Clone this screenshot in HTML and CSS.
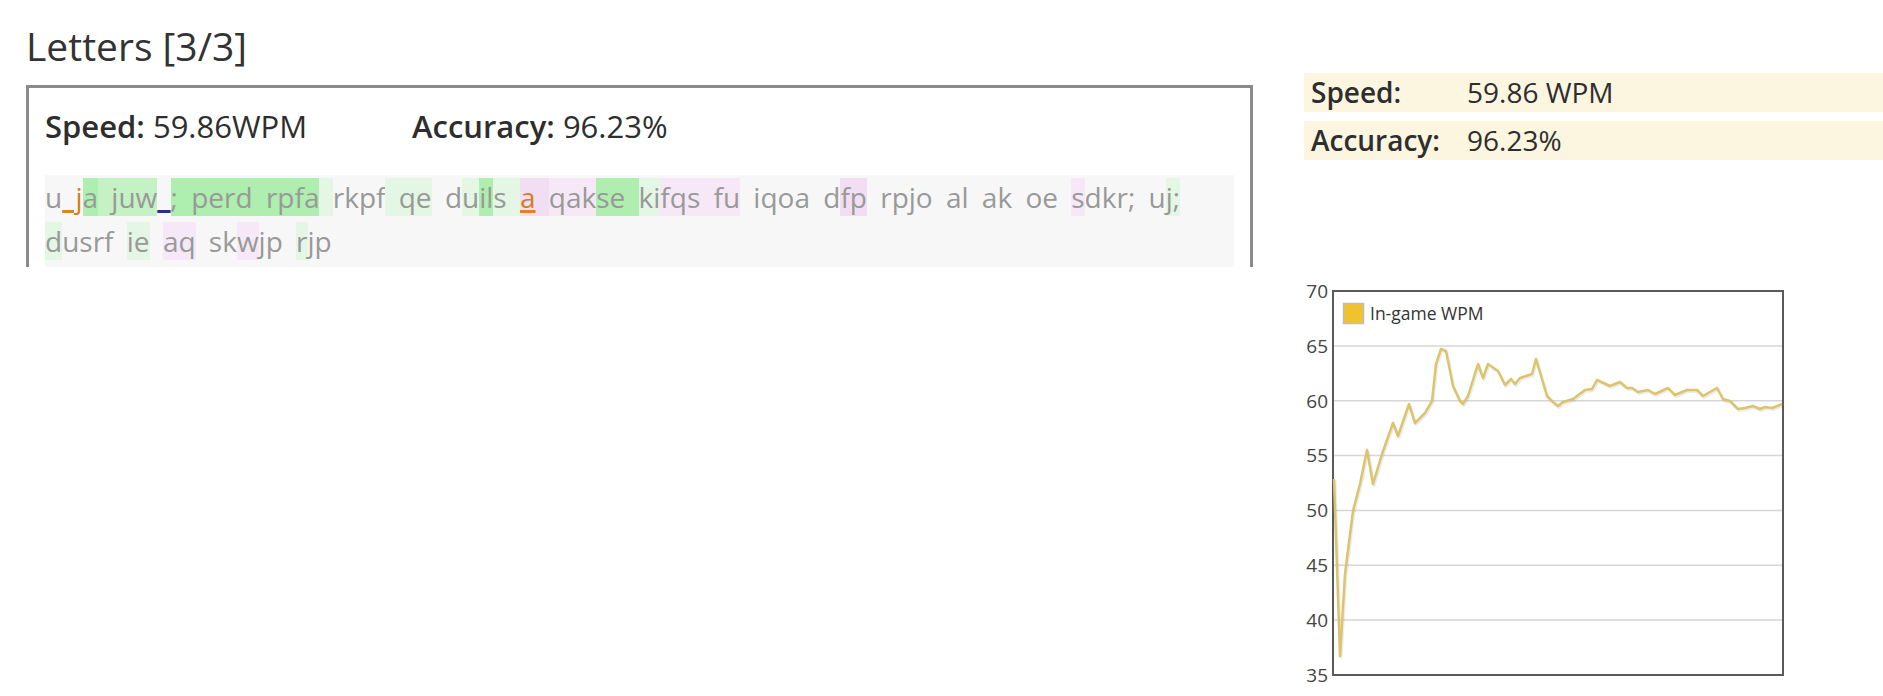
FILE: index.html
```html
<!DOCTYPE html>
<html lang="en">
<head>
<meta charset="utf-8">
<title>Letters [3/3]</title>
<link rel="stylesheet" href="styles.css">
</head>
<body>
<div class="page">
  <section class="main">
    <h1 class="title">Letters [3/3]</h1>
    <div class="box">
      <div class="stats">
        <div class="stat"><b>Speed:</b> 59.86WPM</div>
        <div class="stat"><b>Accuracy:</b> 96.23%</div>
      </div>
      <div class="typed">u<span class="err"> j</span><span class="g3">a</span><span class="g2"> ju</span><span class="g2">w</span><span class="miss"> </span><span class="g3">; perd rpfa</span><span class="g1"> </span>rkpf<span class="g1"> qe</span> d<span class="g1">u</span><span class="g3">il</span><span class="g1">s </span><span class="p2"><span class="err">a</span> </span><span class="p1">qak</span><span class="g3">se </span><span class="g1">ki</span><span class="p1">fqs fu</span> iqoa d<span class="p2">fp</span> rpjo al ak oe <span class="p1">s</span>dkr; u<span class="g1">j;</span><br><span class="g1">d</span>usrf <span class="g1">ie</span> <span class="p1">aq</span> sk<span class="p1">w</span>jp <span class="g1">r</span>jp</div>
    </div>
  </section>
  <aside class="side">
    <div class="row"><span class="label">Speed:</span><span class="value">59.86 WPM</span></div>
    <div class="row"><span class="label">Accuracy:</span><span class="value">96.23%</span></div>
    <svg class="chart" width="490" height="412" viewBox="0 0 490 412">
      <g class="grid">
        <line x1="33" y1="64.9" x2="483" y2="64.9"/>
        <line x1="33" y1="119.7" x2="483" y2="119.7"/>
        <line x1="33" y1="174.6" x2="483" y2="174.6"/>
        <line x1="33" y1="229.4" x2="483" y2="229.4"/>
        <line x1="33" y1="284.3" x2="483" y2="284.3"/>
        <line x1="33" y1="339.1" x2="483" y2="339.1"/>
      </g>
      <rect class="frame" x="33" y="10" width="450" height="384"/>
      <g class="ylabels">
        <text x="28" y="16.8">70</text>
        <text x="28" y="71.7">65</text>
        <text x="28" y="126.5">60</text>
        <text x="28" y="181.4">55</text>
        <text x="28" y="236.2">50</text>
        <text x="28" y="291.1">45</text>
        <text x="28" y="345.9">40</text>
        <text x="28" y="400.8">35</text>
      </g>
      <polyline class="shadow" points="34,198 40,375 45,293 53,230 60,203 67,169 73,203 82,173 93,142 98,155 109,123 115,142 125,132 132,120 136,83 141,68 146,70 153,105 160,120 163,123 168,115 178,83 183,97 188,83 198,90 205,104 211,98 215,103 220,97 232,93 236,78 247,115 253,121 258,125 263,121 273,118 285,109 292,108 297,99 310,105 320,101 327,107 332,107 338,111 348,109 355,113 368,107 375,114 387,109 397,109 403,115 417,107 423,118 430,120 438,128 445,127 453,125 460,128 465,126 472,127 482,123"/>
      <polyline class="line" points="34,198 40,375 45,293 53,230 60,203 67,169 73,203 82,173 93,142 98,155 109,123 115,142 125,132 132,120 136,83 141,68 146,70 153,105 160,120 163,123 168,115 178,83 183,97 188,83 198,90 205,104 211,98 215,103 220,97 232,93 236,78 247,115 253,121 258,125 263,121 273,118 285,109 292,108 297,99 310,105 320,101 327,107 332,107 338,111 348,109 355,113 368,107 375,114 387,109 397,109 403,115 417,107 423,118 430,120 438,128 445,127 453,125 460,128 465,126 472,127 482,123"/>
      <rect class="swatch" x="43.5" y="22.5" width="20" height="20"/>
      <text class="legend" x="70" y="39">In-game WPM</text>
    </svg>
  </aside>
</div>
</body>
</html>
```
FILE: styles.css
```css
html, body {
  margin: 0;
  padding: 0;
  background: #ffffff;
  overflow: hidden;
}

body {
  font-family: "Open Sans", "Noto Sans", sans-serif;
  color: #333333;
}

.page {
  display: flex;
  align-items: flex-start;
}

.main {
  flex: none;
  width: 1227px;
  margin-left: 26px;
}

.title {
  margin: 24px 0 17px;
  font-size: 39px;
  line-height: 44px;
  font-weight: 400;
  color: #333333;
}

.box {
  border: 3px solid #8a8a8a;
  border-bottom: none;
  padding: 18px 16px 0;
}

.stats {
  display: flex;
  font-size: 31px;
  line-height: 40px;
  color: #2e2e2e;
}

.stat {
  width: 367px;
}

.stat b {
  font-weight: 600;
}

.typed {
  margin-top: 29px;
  padding-bottom: 4px;
  background: #f7f7f7;
  font-size: 28px;
  line-height: 44px;
  word-spacing: 6px;
  color: #999999;
}

.g1 { background: #e4f6e4; }
.g2 { background: #c4f2c4; }
.g3 { background: #aeeeae; }
.p1 { background: #f6e8f6; }
.p2 { background: #f2def2; }

.err {
  color: #d27f1f;
  text-decoration: underline;
  text-decoration-color: #d9861f;
  text-decoration-thickness: 3px;
  text-underline-offset: 2px;
}

.miss {
  text-decoration: underline;
  text-decoration-color: #2b2b8f;
  text-decoration-thickness: 3px;
  text-underline-offset: 2px;
}

.side {
  flex: 1;
  margin-left: 51px;
  padding-top: 73px;
}

.row {
  display: flex;
  height: 39px;
  background: #fcf6e1;
  font-size: 28px;
  line-height: 39px;
  color: #2e2e2e;
}

.row + .row {
  margin-top: 9px;
}

.label {
  width: 156px;
  padding-left: 7px;
  font-weight: 600;
}

.chart {
  display: block;
  margin-top: 121px;
  margin-left: -4px;
  font-family: "Open Sans", "Noto Sans", sans-serif;
}

.grid line {
  stroke: #d6d6d6;
  stroke-width: 1.5;
}

.frame {
  fill: none;
  stroke: #5a5a5a;
  stroke-width: 2;
}

.ylabels text {
  font-size: 19px;
  fill: #444444;
  text-anchor: end;
}

.line {
  fill: none;
  stroke: #dcc46c;
  stroke-width: 2.5;
  stroke-linejoin: round;
}

.shadow {
  fill: none;
  stroke: rgba(0, 0, 0, 0.08);
  stroke-width: 3;
  stroke-linejoin: round;
  transform: translate(1px, 1.5px);
}

.swatch {
  fill: #f2c22c;
  stroke: #bdbdbd;
  stroke-width: 1.5;
}

.legend {
  font-size: 17.5px;
  fill: #333333;
}
```
